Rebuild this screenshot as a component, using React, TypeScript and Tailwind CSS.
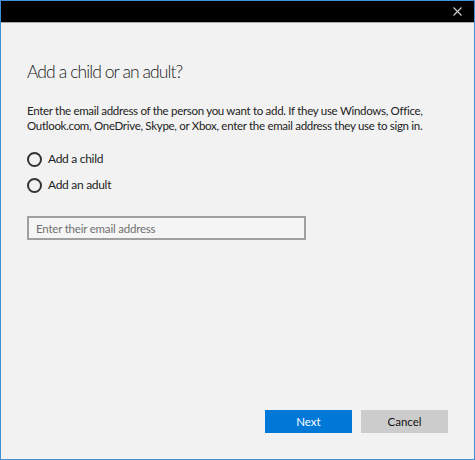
import { useState } from 'react';

const options = [
  { key: 'child', label: 'Add a child' },
  { key: 'adult', label: 'Add an adult' },
];

function Radio({ checked, label, onClick }: { checked: boolean; label: string; onClick: () => void }) {
  return (
    <button type="button" onClick={onClick} className="flex h-[14px] items-center gap-[6px] text-left">
      <span className="flex h-[15px] w-[15px] items-center justify-center rounded-full border-[2px] border-[#333]">
        {checked && <span className="h-[7px] w-[7px] rounded-full bg-[#333]" />}
      </span>
      <span className="text-[12px] leading-none tracking-[-0.3px] text-[#222]">{label}</span>
    </button>
  );
}

export default function App() {
  const [who, setWho] = useState<string | null>(null);
  const [email, setEmail] = useState('');

  return (
    <div
      className="flex h-[460px] w-[475px] flex-col border border-[#3c8fd8] bg-[#f2f2f2]"
      style={{ fontFamily: 'Lato, "Noto Sans", sans-serif' }}
    >
      <div className="flex h-[22px] items-center justify-end border-b border-[#a8a8a8] bg-black pr-[12px]">
        <svg width="9" height="9" viewBox="0 0 9 9" className="text-[#cfcfcf]">
          <path d="M0.5 0.5 L8.5 8.5 M8.5 0.5 L0.5 8.5" stroke="currentColor" strokeWidth="1.1" />
        </svg>
      </div>

      <div className="flex flex-1 flex-col px-[26px]">
        <div className="mt-[37px] whitespace-nowrap text-[17.5px] font-light leading-[24px] tracking-[-0.9px] text-[#1a1a1a]">
          Add a child or an adult?
        </div>

        <div className="mt-[19px] whitespace-nowrap text-[11.5px] leading-[15px] tracking-[-0.3px] text-[#222]">
          Enter the email address of the person you want to add. If they use Windows, Office,
          <br />
          Outlook.com, OneDrive, Skype, or Xbox, enter the email address they use to sign in.
        </div>

        <div className="mt-[19px] flex flex-col gap-[12px]">
          {options.map((o) => (
            <Radio key={o.key} checked={who === o.key} label={o.label} onClick={() => setWho(o.key)} />
          ))}
        </div>

        <input
          value={email}
          onChange={(e) => setEmail(e.target.value)}
          placeholder="Enter their email address"
          className="mt-[24px] h-[24px] w-[279px] border-[2px] border-[#a0a0a0] bg-[#f5f5f5] px-[7px] text-[11.5px] tracking-[-0.2px] text-[#222] outline-none placeholder:text-[#707070]"
        />

        <div className="mt-auto mb-[26px] flex justify-end gap-[9px]">
          <button type="button" className="h-[23px] w-[87px] bg-[#0078d7] text-[11.5px] text-white">
            Next
          </button>
          <button type="button" className="h-[23px] w-[87px] bg-[#cccccc] text-[11.5px] text-[#111]">
            Cancel
          </button>
        </div>
      </div>
    </div>
  );
}
